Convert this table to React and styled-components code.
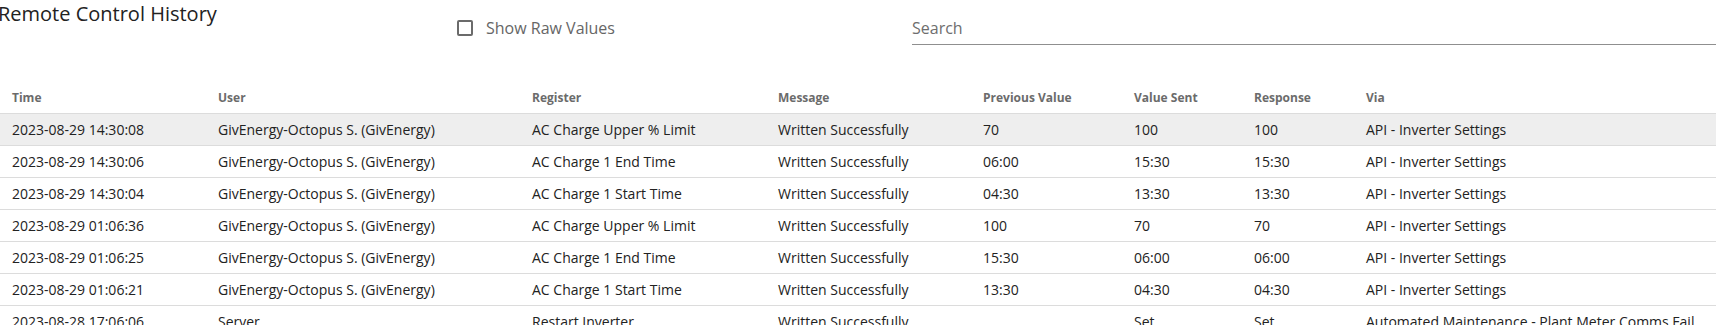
import styled, { createGlobalStyle } from "styled-components";

const GlobalStyle = createGlobalStyle`
  body {
    margin: 0;
    background: #ffffff;
    font-family: "Open Sans", "Liberation Sans", sans-serif;
    overflow: hidden;
  }
`;

const columns = [
  { key: "time", label: "Time", width: 206 },
  { key: "user", label: "User", width: 314 },
  { key: "register", label: "Register", width: 246 },
  { key: "message", label: "Message", width: 205 },
  { key: "previous", label: "Previous Value", width: 151 },
  { key: "sent", label: "Value Sent", width: 120 },
  { key: "response", label: "Response", width: 112 },
  { key: "via", label: "Via", width: 362 },
];

const USER = "GivEnergy-Octopus S. (GivEnergy)";
const OK = "Written Successfully";
const API = "API - Inverter Settings";

const rows = [
  { time: "2023-08-29 14:30:08", user: USER, register: "AC Charge Upper % Limit", message: OK, previous: "70", sent: "100", response: "100", via: API },
  { time: "2023-08-29 14:30:06", user: USER, register: "AC Charge 1 End Time", message: OK, previous: "06:00", sent: "15:30", response: "15:30", via: API },
  { time: "2023-08-29 14:30:04", user: USER, register: "AC Charge 1 Start Time", message: OK, previous: "04:30", sent: "13:30", response: "13:30", via: API },
  { time: "2023-08-29 01:06:36", user: USER, register: "AC Charge Upper % Limit", message: OK, previous: "100", sent: "70", response: "70", via: API },
  { time: "2023-08-29 01:06:25", user: USER, register: "AC Charge 1 End Time", message: OK, previous: "15:30", sent: "06:00", response: "06:00", via: API },
  { time: "2023-08-29 01:06:21", user: USER, register: "AC Charge 1 Start Time", message: OK, previous: "13:30", sent: "04:30", response: "04:30", via: API },
  { time: "2023-08-28 17:06:06", user: "Server", register: "Restart Inverter", message: OK, previous: "", sent: "Set", response: "Set", via: "Automated Maintenance - Plant Meter Comms Fail" },
];

const App = () => {
  return (
    <>
      <GlobalStyle />
      <Page>
        <Toolbar>
          <Title>Remote Control History</Title>
          <Toggle>
            <Box type="checkbox" />
            <span>Show Raw Values</span>
          </Toggle>
          <Search placeholder="Search" />
        </Toolbar>
        <Table>
          <colgroup>
            {columns.map((c) => (
              <col key={c.key} style={{ width: c.width }} />
            ))}
          </colgroup>
          <thead>
            <tr>
              {columns.map((c) => (
                <Th key={c.key}>{c.label}</Th>
              ))}
            </tr>
          </thead>
          <tbody>
            {rows.map((row, i) => (
              <Row key={i} $active={i === 0}>
                {columns.map((c) => (
                  <Td key={c.key}>{row[c.key]}</Td>
                ))}
              </Row>
            ))}
          </tbody>
        </Table>
      </Page>
    </>
  );
};

const Page = styled.div`
  width: 1716px;
  height: 325px;
  overflow: hidden;
`;

const Toolbar = styled.div`
  display: flex;
  align-items: flex-start;
  height: 81px;
`;

const Title = styled.h2`
  margin: 0 0 0 -2px;
  width: 459px;
  flex-shrink: 0;
  font-size: 20px;
  font-weight: 400;
  line-height: 27px;
  color: #222222;
`;

const Toggle = styled.label`
  display: flex;
  align-items: center;
  gap: 13px;
  width: 455px;
  flex-shrink: 0;
  margin-top: 20px;
  font-size: 16px;
  line-height: 16px;
  color: #666666;
`;

const Box = styled.input`
  appearance: none;
  margin: 0;
  width: 16px;
  height: 16px;
  border: 2px solid #6b6b6b;
  border-radius: 2px;
  box-sizing: border-box;
`;

const Search = styled.input`
  flex: 1;
  margin-top: 17px;
  padding: 0 0 5px;
  border: none;
  border-bottom: 1px solid #8f8f8f;
  outline: none;
  font-family: inherit;
  font-size: 16px;
  line-height: 22px;
  color: #222222;

  &::placeholder {
    color: #6e6e6e;
  }
`;

const Table = styled.table`
  width: 1716px;
  table-layout: fixed;
  border-collapse: collapse;
`;

const Th = styled.th`
  height: 32px;
  padding: 0 12px;
  text-align: left;
  font-size: 12px;
  font-weight: 700;
  color: #6b6b6b;
  border-bottom: 1px solid #dcdcdc;
  white-space: nowrap;
`;

const Row = styled.tr`
  background: ${(p) => (p.$active ? "#eeeeee" : "transparent")};
`;

const Td = styled.td`
  height: 31px;
  padding: 0 12px;
  font-size: 14px;
  color: #222222;
  border-bottom: 1px solid #dcdcdc;
  white-space: nowrap;
`;

export default App;
